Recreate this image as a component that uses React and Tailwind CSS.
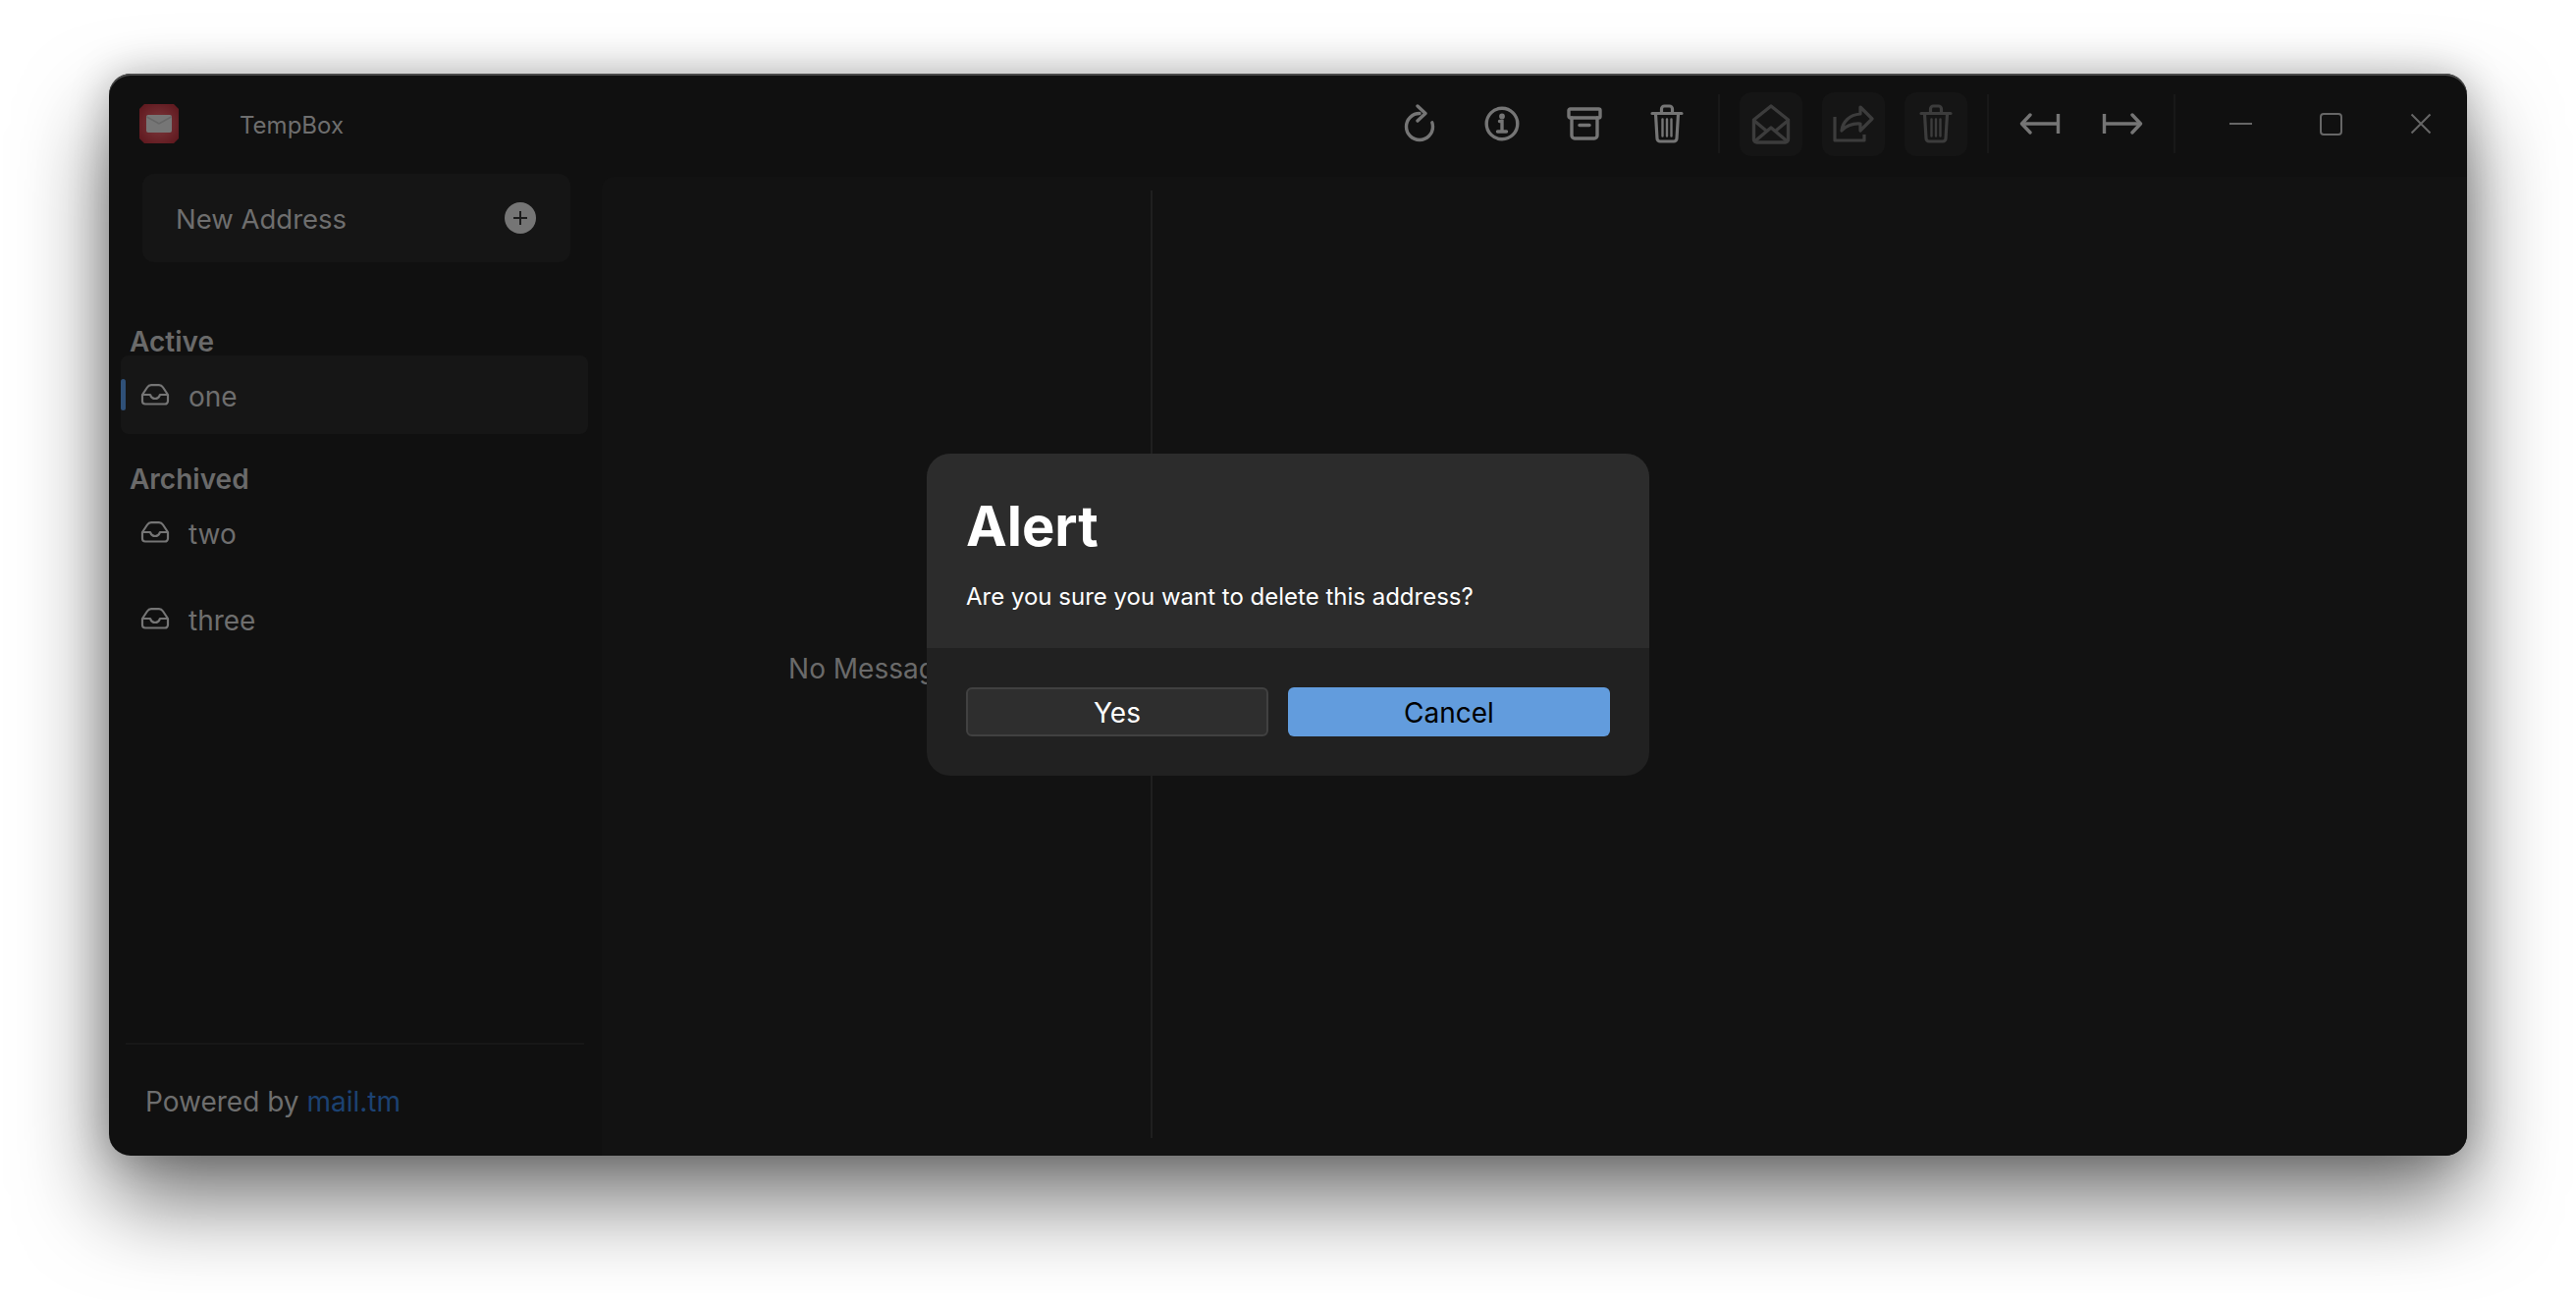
import React from 'react';

const grey = '#757575';
const dim = '#3c3c3c';

function Refresh() {
  return (
    <svg width="34" height="40" viewBox="0 0 34 40" fill="none" stroke={grey} strokeWidth="3.4" strokeLinecap="round" strokeLinejoin="round">
      <path d="M17 9.500C9.500 9.500 3.500 15.500 3.500 23S9.500 36.500 17 36.500 30.500 30.500 30.500 23c0-1.600-.2-3-.7-4.200" />
      <path d="M15 2l8 7.500-8 7.500" />
    </svg>
  );
}

function Info() {
  return (
    <svg width="36" height="36" viewBox="0 0 36 36" fill="none" stroke={grey} strokeWidth="3.400" strokeLinecap="round">
      <circle cx="18" cy="18" r="15.800" />
      <path d="M15.500 15.500h2.500v10M13.500 26h9" />
      <circle cx="18" cy="10.500" r="1.200" fill={grey} />
    </svg>
  );
}

function Archive() {
  return (
    <svg width="36" height="34" viewBox="0 0 36 34" fill="none" stroke={grey} strokeWidth="3.400" strokeLinejoin="round" strokeLinecap="round">
      <rect x="2" y="2" width="32" height="9" rx="1.500" />
      <path d="M5 11v18a3 3 0 0 0 3 3h20a3 3 0 0 0 3-3V11" />
      <path d="M13 18.500h10" />
    </svg>
  );
}

function Trash({ color = grey }) {
  return (
    <svg width="34" height="40" viewBox="0 0 34 40" fill="none" stroke={color} strokeWidth="3.200" strokeLinecap="round" strokeLinejoin="round">
      <path d="M2 9.500h30M11.500 9V5a3 3 0 0 1 3-3h5a3 3 0 0 1 3 3v4" />
      <path d="M5.500 10l1.500 25a3 3 0 0 0 3 3h14a3 3 0 0 0 3-3l1.500-25" />
      <path d="M12.500 15.500v17M17 15.500v17M21.500 15.500v17" strokeWidth="2.400" />
    </svg>
  );
}

function EnvelopeOpen() {
  return (
    <svg width="40" height="41" viewBox="0 0 40 41" fill="none" stroke={dim} strokeWidth="3.400" strokeLinecap="round" strokeLinejoin="round">
      <path d="M2.500 16L20 2l17.500 14v20a3 3 0 0 1-3 3h-29a3 3 0 0 1-3-3z" />
      <path d="M3 17l12 10M37 17L25 27M4 37.500L20 24l16 13.500" />
    </svg>
  );
}

function Share() {
  return (
    <svg width="42" height="38" viewBox="0 0 42 38" fill="none" stroke={dim} strokeWidth="3.200" strokeLinecap="miter" strokeLinejoin="round">
      <path d="M2 12v24h30v-6" />
      <path d="M28 2l12 12-12 12v-7c-8-.5-14 1.500-19 7 1-9 8-16 19-17z" />
    </svg>
  );
}

function ArrowToBar({ flip }) {
  return (
    <svg width="42" height="22" viewBox="0 0 42 22" fill="none" stroke={grey} strokeWidth="3.400" className={flip ? '-scale-x-100' : ''}>
      <path d="M11 2L2.500 11 11 20" strokeLinecap="round" strokeLinejoin="round" />
      <path d="M3 11h36" />
      <path d="M39.500 1v20" />
    </svg>
  );
}

function Inbox() {
  return (
    <svg width="30" height="22" viewBox="0 0 30 22" fill="none" stroke={grey} strokeWidth="2.200" strokeLinejoin="round">
      <path d="M2 11L7 3.500C8 2 9.500 1.200 11 1.200h8c1.500 0 3 .8 4 2.300L28 11v6.500a3 3 0 0 1-3 3H5a3 3 0 0 1-3-3z" />
      <path d="M2 11h8c1 2.700 3 4 5 4s4-1.300 5-4h8" />
    </svg>
  );
}

function Logo() {
  return (
    <svg width="40" height="40" viewBox="0 0 40 40">
      <defs>
        <radialGradient id="logoGlow" cx="50%" cy="50%" r="60%">
          <stop offset="0%" stopColor="#7d3a3e" />
          <stop offset="100%" stopColor="#611a20" />
        </radialGradient>
      </defs>
      <path d="M5 0h30l5 5v30l-5 5H5l-5-5V5z" fill="url(#logoGlow)" />
      <rect x="7" y="11" width="26" height="18" rx="2" fill="#767676" />
      <path d="M7.500 13l12.500 7 12.500-7" fill="none" stroke="#666666" strokeWidth="1.500" />
    </svg>
  );
}

function ToolButton({ children, boxed }) {
  return (
    <div className={`w-16 h-[65px] flex items-center justify-center rounded-xl ${boxed ? 'bg-[#151515]' : ''}`}>
      {children}
    </div>
  );
}

function Separator() {
  return <div className="w-[2px] h-[60px] bg-[#181818] mx-[20px]" />;
}

function Address({ name, active }) {
  return (
    <div className={`relative h-20 flex items-center rounded-lg pl-5 ${active ? 'bg-[#161616]' : ''}`}>
      {active && <div className="absolute left-0 top-6 w-[5px] h-8 rounded-full bg-[#2f5078]" />}
      <Inbox />
      <span className="ml-[19px] pt-1 text-[28px] leading-8 text-[#6e6e6e]">{name}</span>
    </div>
  );
}

export default function App() {
  return (
    <div className="relative w-[2624px] h-[1324px] bg-white overflow-hidden pl-[111px] pt-[75px] font-['Inter',sans-serif]">
      <div className="w-[2402px] h-[1102px] flex flex-col rounded-[22px] bg-[#101010] overflow-hidden shadow-[0_46px_90px_rgba(0,0,0,0.55),0_0_40px_rgba(0,0,0,0.22),inset_0_2px_0_#4a4a4a]">
        {/* titlebar */}
        <div className="h-[102px] shrink-0 flex items-center">
          <div className="ml-[31px]"><Logo /></div>
          <span className="ml-[62px] pt-[3px] text-[24px] text-[#6e6e6e]">TempBox</span>
          <div className="ml-auto mr-[1px] flex items-center">
            <div className="flex items-center gap-5">
              <ToolButton><Refresh /></ToolButton>
              <ToolButton><Info /></ToolButton>
              <ToolButton><Archive /></ToolButton>
              <ToolButton><Trash /></ToolButton>
            </div>
            <Separator />
            <div className="flex items-center gap-5">
              <ToolButton boxed><EnvelopeOpen /></ToolButton>
              <ToolButton boxed><Share /></ToolButton>
              <ToolButton boxed><Trash color={dim} /></ToolButton>
            </div>
            <Separator />
            <div className="flex items-center gap-5">
              <ToolButton><ArrowToBar /></ToolButton>
              <ToolButton><ArrowToBar flip /></ToolButton>
            </div>
            <Separator />
            <div className="flex items-center">
              <div className="w-[92px] h-[65px] flex items-center justify-center">
                <div className="w-[23px] h-[2px] bg-[#666666]" />
              </div>
              <div className="w-[92px] h-[65px] flex items-center justify-center">
                <div className="w-[23px] h-[23px] rounded-[4px] border-2 border-[#666666]" />
              </div>
              <div className="w-[92px] h-[65px] flex items-center justify-center">
                <svg width="22" height="22" viewBox="0 0 22 22" stroke="#666666" strokeWidth="2"><path d="M1.500 1.500l19 19M20.500 1.500l-19 19" /></svg>
              </div>
            </div>
          </div>
        </div>

        <div className="flex-1 flex min-h-0">
          {/* sidebar */}
          <div className="w-[502px] shrink-0 flex flex-col">
            <div className="ml-[34px] w-[436px] h-[90px] shrink-0 flex items-center justify-between pl-[34px] pr-[35px] rounded-xl bg-[#151515]">
              <span className="pt-[3px] text-[27.5px] text-[#6e6e6e]">New Address</span>
              <div className="w-8 h-8 rounded-full bg-[#757575] flex items-center justify-center">
                <svg width="16" height="16" viewBox="0 0 16 16" stroke="#1c1c1c" strokeWidth="2"><path d="M8 1v14M1 8h14" /></svg>
              </div>
            </div>
            <div className="ml-[12px] w-[476px] flex-1 flex flex-col">
              <div className="mt-[67px] ml-[9px] h-7 text-[28px] leading-7 font-semibold text-[#6a6a6a]">Active</div>
              <Address name="one" active />
              <div className="mt-8 ml-[9px] h-7 text-[28px] leading-7 font-semibold text-[#6a6a6a]">Archived</div>
              <Address name="two" />
              <div className="mt-2"><Address name="three" /></div>
            </div>
            <div className="ml-[17px] w-[467px] h-[2px] bg-[#171717]" />
            <div className="h-[113px] shrink-0 flex items-center pl-[37px] pt-[3px] text-[28px] text-[#6e6e6e]">
              <span>Powered by&nbsp;</span>
              <span className="text-[#1c4272]">mail.tm</span>
            </div>
          </div>

          {/* main */}
          <div className="flex-1 mt-[3px] rounded-tl-xl bg-[#121212] flex">
            <div className="w-[559px] flex items-center justify-center pt-[4px] pl-[2px] text-[28px] text-[#6a6a6a]">No Messages</div>
            <div className="w-[2px] mt-[14px] bg-[#1f1f1f] mb-[18px]" />
          </div>
        </div>
      </div>

      {/* alert dialog */}
      <div className="absolute left-[944px] top-[462px] w-[736px] h-[328px] rounded-3xl overflow-hidden flex flex-col bg-[#212121]">
        <div className="h-[198px] shrink-0 bg-[#2c2c2c] pl-10 pt-10">
          <div className="text-[56px] leading-[68px] font-bold text-white">Alert</div>
          <div className="mt-[22px] text-[24px] leading-8 text-white">Are you sure you want to delete this address?</div>
        </div>
        <div className="flex-1 flex gap-5 pl-10 pt-10">
          <button className="w-[308px] h-[50px] pt-[2px] rounded-md bg-[#2e2e2e] border-2 border-[#414141] text-[28px] text-white">Yes</button>
          <button className="w-[328px] h-[50px] pt-[2px] rounded-md bg-[#629cdd] text-[28px] text-black">Cancel</button>
        </div>
      </div>
    </div>
  );
}
